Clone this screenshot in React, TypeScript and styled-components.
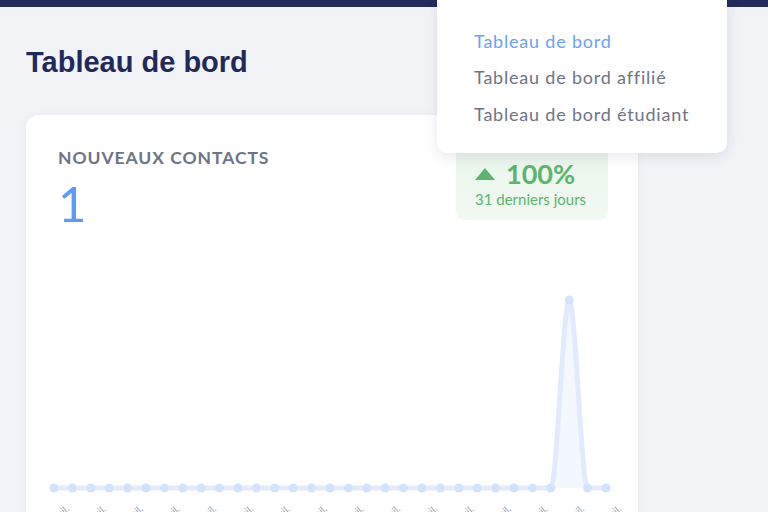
import React from "react";
import styled, { createGlobalStyle } from "styled-components";

const Global = createGlobalStyle`
  html, body { margin: 0; padding: 0; background: #f2f3f7; overflow: hidden; }
  body { width: 768px; height: 512px; font-family: "Lato", "Liberation Sans", sans-serif; }
  * { box-sizing: border-box; }
`;

const Page = styled.div`
  position: relative;
  width: 768px;
  height: 512px;
  overflow: hidden;
  background: #f2f3f7;
`;

const TopBar = styled.div`
  height: 7px;
  background: #232b5d;
`;

const Main = styled.main`
  padding: 38px 0 0 26px;
  display: flex;
  flex-direction: column;
`;

const Title = styled.h1`
  margin: 0;
  font-family: "Liberation Sans", Arial, sans-serif;
  font-weight: 700;
  font-size: 29px;
  line-height: 34px;
  color: #1f2a5b;
`;

const Card = styled.section`
  margin-top: 36px;
  width: 612px;
  background: #ffffff;
  border-radius: 12px;
  box-shadow: 0 0 6px rgba(30, 40, 80, 0.05);
  display: flex;
  flex-direction: column;
`;

const CardHeader = styled.div`
  display: flex;
  justify-content: space-between;
  align-items: flex-start;
  padding: 28px 30px 0 32px;
  height: 115px;
`;

const StatBlock = styled.div`
  display: flex;
  flex-direction: column;
  padding-top: 4px;
`;

const Label = styled.div`
  font-size: 17.5px;
  font-weight: 700;
  letter-spacing: 0.95px;
  line-height: 22px;
  color: #6d7485;
  text-transform: uppercase;
`;

const Value = styled.div`
  margin-top: 6px;
  font-size: 49px;
  font-weight: 400;
  line-height: 56px;
  color: #5e9bf5;
`;

const Badge = styled.div`
  width: 152px;
  height: 77px;
  border-radius: 8px;
  background: linear-gradient(#e8f5ea, #f1f9f3);
  display: flex;
  flex-direction: column;
  justify-content: flex-end;
  padding: 0 0 12px 19px;
  color: #5cb46d;
`;

const BadgeTop = styled.div`
  display: flex;
  align-items: center;
  gap: 11px;
  font-size: 27px;
  font-weight: 700;
  line-height: 30px;
`;

const BadgeSub = styled.div`
  font-size: 15px;
  line-height: 18px;
  margin-top: 1px;
`;

const ChartSvg = styled.svg`
  display: block;
  width: 612px;
  height: 300px;
`;

const Menu = styled.nav`
  position: absolute;
  left: 437px;
  top: -10px;
  width: 290px;
  height: 163px;
  background: #ffffff;
  border-radius: 10px;
  box-shadow: 0 4px 14px rgba(30, 40, 80, 0.1);
  padding: 33px 0 0 37px;
  display: flex;
  flex-direction: column;
`;

const MenuItem = styled.a<{ $active?: boolean }>`
  font-size: 18px;
  letter-spacing: 0.8px;
  line-height: 36.3px;
  color: ${(p) => (p.$active ? "#6ba1f6" : "#6f7485")};
  text-decoration: none;
  white-space: nowrap;
`;

const N = 31;
const PEAK = 28;
const X0 = 28;
const DX = 18.4;
const BASE = 258;
const TOP = 70;

const pts = Array.from({ length: N }, (_, i) => ({
  x: X0 + i * DX,
  y: i === PEAK ? TOP : BASE,
}));

function buildPath(): string {
  // monotone-x: tangents are zero at every point for this data shape
  let d = `M${pts[0].x},${pts[0].y}`;
  for (let i = 1; i < pts.length; i++) {
    const a = pts[i - 1];
    const b = pts[i];
    const h = (b.x - a.x) / 3;
    d += ` C${a.x + h},${a.y} ${b.x - h},${b.y} ${b.x},${b.y}`;
  }
  return d;
}

const linePath = buildPath();
const areaPath = `${linePath} L${pts[N - 1].x},${BASE} L${pts[0].x},${BASE} Z`;

const labels = Array.from({ length: 16 }, (_, i) => i * 2);

export default function App() {
  return (
    <Page>
      <Global />
      <TopBar />
      <Main>
        <Title>Tableau de bord</Title>
        <Card>
          <CardHeader>
            <StatBlock>
              <Label>Nouveaux contacts</Label>
              <Value>1</Value>
            </StatBlock>
            <Badge>
              <BadgeTop>
                <svg width="20" height="12" viewBox="0 0 20 12">
                  <path d="M10 0 L20 12 L0 12 Z" fill="#5cb46d" />
                </svg>
                <span>100%</span>
              </BadgeTop>
              <BadgeSub>31 derniers jours</BadgeSub>
            </Badge>
          </CardHeader>
          <ChartSvg viewBox="0 0 612 300">
            <path d={areaPath} fill="#f3f7fe" />
            <path
              d={linePath}
              fill="none"
              stroke="#e1ebfd"
              strokeWidth={5}
              strokeLinejoin="round"
            />
            {pts.map((p, i) => (
              <circle key={i} cx={p.x} cy={p.y} r={4.5} fill="#d4e3fc" />
            ))}
            {labels.map((i) => {
              const lx = X0 + i * DX + 16;
              const ly = BASE + 22;
              return (
                <text
                  key={i}
                  x={lx}
                  y={ly}
                  fontSize={10}
                  fill="#a3a8b3"
                  fontFamily="Lato, sans-serif"
                  transform={`rotate(-40 ${lx} ${ly})`}
                  textAnchor="end"
                >
                  {`${i + 1} juil.`}
                </text>
              );
            })}
          </ChartSvg>
        </Card>
      </Main>
      <Menu>
        <MenuItem $active href="#">Tableau de bord</MenuItem>
        <MenuItem href="#">Tableau de bord affilié</MenuItem>
        <MenuItem href="#">Tableau de bord étudiant</MenuItem>
      </Menu>
    </Page>
  );
}
